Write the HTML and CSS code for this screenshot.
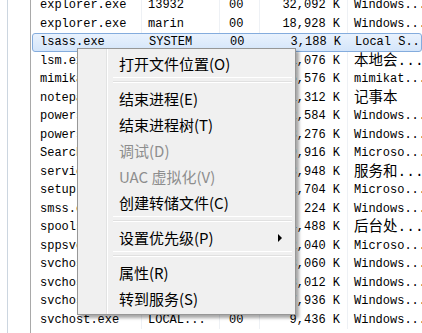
FILE: index.html
```html
<!DOCTYPE html>
<html lang="zh-CN">
<head>
    <meta charset="UTF-8">
    <title>任务管理器 - 进程</title>
    <link rel="stylesheet" href="styles.css">
</head>
<body>
    <div class="frame">
        <div class="edge"></div>
        <div class="spacer"></div>

        <div class="proc-list">
            <div class="row"><span class="c-name">explorer.exe</span><span class="c-user">13932</span><span class="c-cpu">00</span><span class="c-mem">32,092 K</span><span class="c-desc">Windows...</span></div>
            <div class="row"><span class="c-name">explorer.exe</span><span class="c-user">marin</span><span class="c-cpu">00</span><span class="c-mem">18,928 K</span><span class="c-desc">Windows...</span></div>
            <div class="row selected"><span class="c-name">lsass.exe</span><span class="c-user">SYSTEM</span><span class="c-cpu">00</span><span class="c-mem">3,188 K</span><span class="c-desc">Local S...</span></div>
            <div class="row"><span class="c-name">lsm.exe</span><span class="c-user">SYSTEM</span><span class="c-cpu">00</span><span class="c-mem">1,076 K</span><span class="c-desc cjk">本地会...</span></div>
            <div class="row"><span class="c-name">mimikatz.exe</span><span class="c-user">marin</span><span class="c-cpu">00</span><span class="c-mem">5,576 K</span><span class="c-desc">mimikat...</span></div>
            <div class="row"><span class="c-name">notepad.exe</span><span class="c-user">marin</span><span class="c-cpu">00</span><span class="c-mem">1,312 K</span><span class="c-desc cjk">记事本</span></div>
            <div class="row"><span class="c-name">powershell.exe</span><span class="c-user">marin</span><span class="c-cpu">00</span><span class="c-mem">2,584 K</span><span class="c-desc">Windows...</span></div>
            <div class="row"><span class="c-name">powershell.exe</span><span class="c-user">marin</span><span class="c-cpu">00</span><span class="c-mem">3,276 K</span><span class="c-desc">Windows...</span></div>
            <div class="row"><span class="c-name">SearchIndexer.exe</span><span class="c-user">SYSTEM</span><span class="c-cpu">00</span><span class="c-mem">9,916 K</span><span class="c-desc">Microso...</span></div>
            <div class="row"><span class="c-name">services.exe</span><span class="c-user">SYSTEM</span><span class="c-cpu">00</span><span class="c-mem">3,948 K</span><span class="c-desc cjk">服务和...</span></div>
            <div class="row"><span class="c-name">setup.exe</span><span class="c-user">marin</span><span class="c-cpu">00</span><span class="c-mem">1,704 K</span><span class="c-desc">Microso...</span></div>
            <div class="row"><span class="c-name">smss.exe</span><span class="c-user">SYSTEM</span><span class="c-cpu">00</span><span class="c-mem">224 K</span><span class="c-desc">Windows...</span></div>
            <div class="row"><span class="c-name">spoolsv.exe</span><span class="c-user">SYSTEM</span><span class="c-cpu">00</span><span class="c-mem">4,488 K</span><span class="c-desc cjk">后台处...</span></div>
            <div class="row"><span class="c-name">sppsvc.exe</span><span class="c-user">NETWORK</span><span class="c-cpu">00</span><span class="c-mem">2,040 K</span><span class="c-desc">Microso...</span></div>
            <div class="row"><span class="c-name">svchost.exe</span><span class="c-user">SYSTEM</span><span class="c-cpu">00</span><span class="c-mem">3,060 K</span><span class="c-desc">Windows...</span></div>
            <div class="row"><span class="c-name">svchost.exe</span><span class="c-user">NETWORK</span><span class="c-cpu">00</span><span class="c-mem">3,012 K</span><span class="c-desc">Windows...</span></div>
            <div class="row"><span class="c-name">svchost.exe</span><span class="c-user">LOCAL...</span><span class="c-cpu">00</span><span class="c-mem">7,936 K</span><span class="c-desc">Windows...</span></div>
            <div class="row"><span class="c-name">svchost.exe</span><span class="c-user">LOCAL...</span><span class="c-cpu">00</span><span class="c-mem">9,436 K</span><span class="c-desc">Windows...</span></div>
        </div>
    </div>

    <!-- контекстное меню поверх списка -->
    <div class="context-menu">
        <div class="menu-item">打开文件位置(O)</div>
        <div class="menu-sep"></div>
        <div class="menu-item">结束进程(E)</div>
        <div class="menu-item">结束进程树(T)</div>
        <div class="menu-item disabled">调试(D)</div>
        <div class="menu-item disabled">UAC 虚拟化(V)</div>
        <div class="menu-item">创建转储文件(C)</div>
        <div class="menu-sep"></div>
        <div class="menu-item">设置优先级(P)<span class="submenu-arrow"></span></div>
        <div class="menu-sep"></div>
        <div class="menu-item">属性(R)</div>
        <div class="menu-item">转到服务(S)</div>
    </div>
</body>
</html>
```

FILE: styles.css
```css
body {
    margin: 0;
    background-color: #fff;
    color: #000;
    overflow: hidden;
    height: 333px;
}

.frame {
    display: flex;
    height: 333px;
}

.edge {
    width: 7px;
    border-right: 1px solid #ccd6e0;
}

.spacer {
    width: 22px;
}

.proc-list {
    flex: 1;
    border-left: 1px solid #a9a9a9;
    padding-left: 1px;
    margin-top: -4px;
    overflow: hidden;
    font-family: "Liberation Mono", "Noto Sans CJK SC", monospace;
    font-size: 12px;
}

.row {
    display: flex;
    height: 18.5px;
    line-height: 18.5px;
    white-space: nowrap;
    box-sizing: border-box;
}

.row span {
    overflow: hidden;
    box-sizing: border-box;
    border-right: 1px solid #eef1f5;
}

.c-name {
    width: 110px;
    padding-left: 8px;
}

.c-user {
    width: 78px;
    padding-left: 6px;
}

.c-cpu {
    width: 40px;
    padding-left: 9px;
}

.c-mem {
    width: 88px;
    padding-right: 7px;
    text-align: right;
}

.c-desc {
    flex: 1;
    padding-left: 6px;
}

.row .c-desc {
    border-right: none;
}

.c-desc.cjk {
    font-size: 14.5px;
}

.row.selected {
    border: 1px solid #84acdd;
    border-radius: 3px;
    background: linear-gradient(#e9f2fd, #d4e5fa);
    line-height: 16.5px;
}

.row.selected span {
    border-right-color: transparent;
}

.row.selected .c-name {
    padding-left: 7px;
}

.context-menu {
    position: absolute;
    left: 77px;
    top: 48px;
    width: 219px;
    box-sizing: border-box;
    padding: 2px;
    background-color: #f0f0f0;
    background-image: linear-gradient(to right, transparent 28px, #e2e3e3 28px, #e2e3e3 29px, #fff 29px, #fff 30px, transparent 30px);
    border: 1px solid #979797;
    box-shadow: 3px 3px 3px rgba(0, 0, 0, 0.35);
    font-family: "Noto Sans CJK SC", "Liberation Sans", sans-serif;
    font-size: 15px;
}

.menu-item {
    display: flex;
    align-items: center;
    height: 26px;
    padding-left: 39px;
    line-height: 26px;
}

.menu-item.disabled {
    color: #8d8d8d;
}

.menu-sep {
    height: 9px;
    margin-left: 33px;
    margin-right: 1px;
    box-sizing: border-box;
    border-top: 4px solid transparent;
    background: linear-gradient(#e0e0e0 0, #e0e0e0 1px, #fff 1px, #fff 2px, transparent 2px);
}

.submenu-arrow {
    margin-left: auto;
    margin-right: 11px;
    width: 0;
    height: 0;
    border-top: 4px solid transparent;
    border-bottom: 4px solid transparent;
    border-left: 4px solid #000;
}
```
